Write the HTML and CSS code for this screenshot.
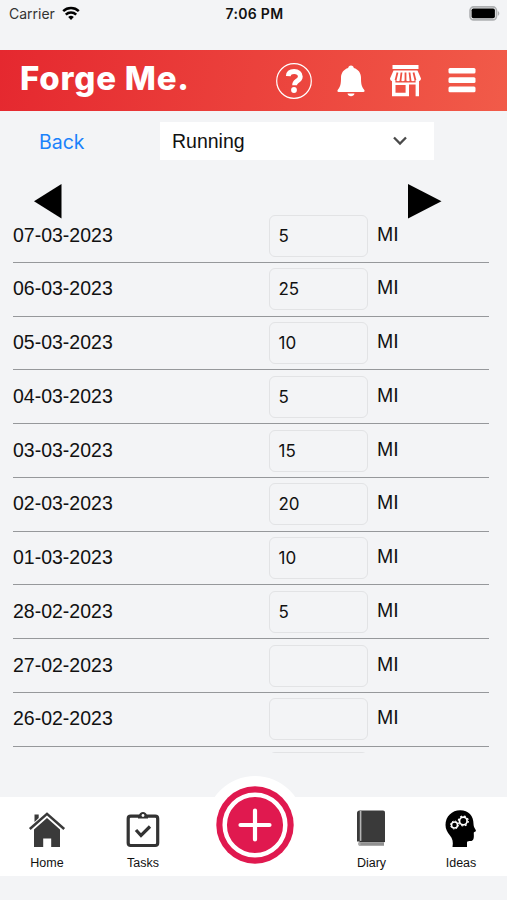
FILE: index.html
```html
<!DOCTYPE html>
<html lang="en">

<head>
  <meta charset="UTF-8">
  <meta name="viewport" content="width=device-width, initial-scale=1">
  <title>Forge Me - Running</title>
  <link rel="stylesheet" href="styles.css">
</head>

<body>
  <div class="app">
    <div class="status-bar">
      <div class="carrier">
        <span>Carrier</span>
        <svg class="wifi" viewBox="0 0 18 14" width="18" height="14">
          <path d="M1.2 5.2a11.3 11.3 0 0 1 15.600 0M3.800 8.600a7.500 7.500 0 0 1 10.400 0" fill="none" stroke="#000" stroke-width="2.500"/>
          <path d="M9 13.900 6.200 11a4.200 4.200 0 0 1 5.600 0z"/>
        </svg>
      </div>
      <div class="time">7:06 PM</div>
      <svg class="battery" viewBox="0 0 31 15" width="31" height="15">
        <rect x="1" y=".9" width="26.500" height="13" rx="3.600" fill="#e9eaeb" stroke="#aeb0b2" stroke-width="1.600"/>
        <rect x="2.600" y="2.500" width="23.300" height="9.800" rx="1.800"/>
        <path d="M28.800 5c2 .8 2 4 0 4.800z" fill="#aeb0b2"/>
      </svg>
    </div>

    <div class="header">
      <div class="logo">Forge Me.</div>
      <div class="header-icons">
        <svg viewBox="0 0 36 36" width="36" height="36">
          <circle cx="18" cy="18" r="17.300" fill="none" stroke="#fff" stroke-width="1.200"/>
          <path d="M12.300 13.100C12.500 9.800 14.700 8.500 18.100 8.500c3.800 0 6.200 1.800 6.200 4.900 0 2.400-1.400 3.500-3.300 4.700-1.900 1.200-2.400 2-2.400 4.200" fill="none" stroke="#fff" stroke-width="4.800"/>
          <circle cx="18" cy="27" r="2.900" fill="#fff"/>
        </svg>
        <svg viewBox="0 0 28 32" width="28" height="32" fill="#fff">
          <path d="M14 .5c1.600 0 2.700 1 2.800 2.500 4.500 1.300 7.200 5 7.200 9.800 0 6.200.6 9 3.300 12.200.6.900.3 2-.9 2H1.600c-1.200 0-1.500-1.100-.9-2C3.400 21.800 4 19 4 12.800 4 8 6.700 4.300 11.200 3 11.300 1.500 12.400.5 14 .5z"/>
          <path d="M10.500 28.500h7c-.5 3.500-6.500 3.500-7 0z"/>
        </svg>
        <svg class="store" viewBox="0 0 31 32" width="31" height="32" fill="#fff">
          <path d="M2.500 0h26v4h-26z"/>
          <path d="M3.500 5.500h24L31 13.500c-.3 3.400-4.500 3.300-5.500.5-.6 3-4.500 3-5 0-.7 3-4 3-5 0-1 3-4.300 3-5 0-.5 3-4.400 3-5 0-1 2.800-5.200 2.900-5.500-.5z"/>
          <path d="M7.500 7.500 5.500 15.500M11.500 7.500 10.500 15.500M15.500 7.500v8M19.500 7.500l1 8M23.500 7.500l2 8" fill="none" stroke="#ef5043" stroke-width="1.800"/>
          <path fill-rule="evenodd" d="M2 15h3.400v2.500h20.200V15H29v16.300h-3.400V19.500H19v11.800H2zM5.500 20v7.800h10.100V20z"/>
        </svg>
        <svg viewBox="0 0 28 26" width="28" height="26" fill="#fff">
          <rect x=".5" y="0" width="27" height="5.600" rx="1.500"/>
          <rect x=".5" y="9.300" width="27" height="5.600" rx="1.500"/>
          <rect x=".5" y="18.600" width="27" height="5.600" rx="1.500"/>
        </svg>
      </div>
    </div>

    <div class="toolbar">
      <a class="back">Back</a>
      <div class="select">
        <span>Running</span>
        <svg viewBox="0 0 16 10" width="16" height="10">
          <path d="M2 1.500 8 7.500 14 1.500" fill="none" stroke="#4a4a4a" stroke-width="2.300"/>
        </svg>
      </div>
    </div>

    <div class="pager">
      <svg viewBox="0 0 28 35" width="28" height="35"><path d="M0 17.300 27.500 0v34.600z"/></svg>
      <svg viewBox="0 0 34 35" width="34" height="35"><path d="M33.500 17.300 0 0v34.600z"/></svg>
    </div>

    <div class="list">
      <div class="row"><span class="date">07-03-2023</span><span class="value">5</span><span class="unit">MI</span></div>
      <div class="row"><span class="date">06-03-2023</span><span class="value">25</span><span class="unit">MI</span></div>
      <div class="row"><span class="date">05-03-2023</span><span class="value">10</span><span class="unit">MI</span></div>
      <div class="row"><span class="date">04-03-2023</span><span class="value">5</span><span class="unit">MI</span></div>
      <div class="row"><span class="date">03-03-2023</span><span class="value">15</span><span class="unit">MI</span></div>
      <div class="row"><span class="date">02-03-2023</span><span class="value">20</span><span class="unit">MI</span></div>
      <div class="row"><span class="date">01-03-2023</span><span class="value">10</span><span class="unit">MI</span></div>
      <div class="row"><span class="date">28-02-2023</span><span class="value">5</span><span class="unit">MI</span></div>
      <div class="row"><span class="date">27-02-2023</span><span class="value"></span><span class="unit">MI</span></div>
      <div class="row"><span class="date">26-02-2023</span><span class="value"></span><span class="unit">MI</span></div>
      <div class="row"><span class="date"></span><span class="value"></span><span class="unit"></span></div>
    </div>

    <div class="tabs">
      <div class="tab">
        <svg viewBox="0 0 38 38" width="38" height="38" fill="#3a3a3a">
          <path d="M6.500 4.500h4.200V8L6.500 12z"/>
          <path d="M1.800 19 19 3.800 36.200 19" fill="none" stroke="#3a3a3a" stroke-width="2.500"/>
          <path d="M19 8 32 19.500V37h-8.800v-8.500h-8V37H6V19.500z"/>
        </svg>
        <span>Home</span>
      </div>
      <div class="tab">
        <svg viewBox="0 0 38 38" width="38" height="38">
          <rect x="4.200" y="6.200" width="29.500" height="29.300" rx="2.500" fill="none" stroke="#333" stroke-width="3.200"/>
          <path d="M14 8.500V5.500h1C15.500.8 22.500.8 23 5.500h1v3z" fill="#333"/>
          <circle cx="19" cy="5.500" r="1.400" fill="#fff"/>
          <path d="m12 20 5 5.500 9-9" fill="none" stroke="#333" stroke-width="3.200"/>
        </svg>
        <span>Tasks</span>
      </div>
      <div class="add">
        <svg viewBox="0 0 78 78" width="78" height="78">
          <circle cx="39" cy="39" r="38.700" fill="#e0194f"/>
          <circle cx="39" cy="39" r="30.300" fill="none" stroke="#fff" stroke-width="4.500"/>
          <path d="M39 24.500v29M24.500 39h29" stroke="#fff" stroke-width="4.200" stroke-linecap="round"/>
        </svg>
      </div>
      <div class="tab">
        <svg viewBox="0 0 38 38" width="38" height="38">
          <path d="M4 3c0-1.500 1-2.500 2.500-2.500H30c1.200 0 2 .7 2 2V31.500H4z" fill="#3a3a3a"/>
          <path d="M7.600 1v30.500" stroke="#b5b5b5" stroke-width="1.600"/>
          <path d="M5 33.700c0-1.600 1.300-2.200 2.500-2.200H31V36H7.500C6 36 5 35.200 5 33.700z" fill="#aaa"/>
          <path d="M7.500 34H31" stroke="#777" stroke-width="1"/>
          <path d="M6.500 31.500H32" stroke="#333" stroke-width="1.200"/>
        </svg>
        <span>Diary</span>
      </div>
      <div class="tab">
        <svg viewBox="0 0 38 38" width="38" height="38">
          <path d="M10.500 37c.9-5 .1-8.500-2.700-11.800C5.400 22.300 3.500 19.200 3.500 15 3.500 6.500 10 .3 18.200.3c8.300 0 13.300 5.700 13.300 13.500 0 2.300.7 3.600 1.800 5.500.9 1.600 1 2.300-.9 2.700-.7.200-.6.700-.6 1.700.3 5-.4 7.200-3.300 7.400-3.200.2-3.500.4-3.500 2.500V37z"/>
          <g fill="none" stroke="#fff">
            <circle cx="12.500" cy="15" r="3" stroke-width="1.500"/>
            <circle cx="12.500" cy="15" r="4" stroke-width="1" stroke-dasharray="1.570 1.571"/>
            <circle cx="21.300" cy="11" r="3.800" stroke-width="1.700"/>
            <circle cx="21.300" cy="11" r="5" stroke-width="1.200" stroke-dasharray="1.960 1.967"/>
          </g>
        </svg>
        <span>Ideas</span>
      </div>
    </div>
  </div>
</body>

</html>
```
FILE: styles.css
```css
body {
  margin: 0;
  background-color: #f3f4f6;
  color: #111;
  font-family: 'Liberation Sans', Arial, sans-serif;
}

svg {
  display: block;
  flex-shrink: 0;
}

.app {
  width: 507px;
  height: 900px;
  overflow: hidden;
}

.status-bar {
  display: grid;
  grid-template-columns: 1fr auto 1fr;
  align-items: center;
  box-sizing: border-box;
  height: 50px;
  padding: 0 7px 24px 9px;
  font-family: Inter, sans-serif;
  font-size: 14px;
}

.carrier {
  display: flex;
  align-items: center;
  gap: 7px;
  color: #333;
}

.time {
  font-weight: 600;
  letter-spacing: 0.3px;
}

.battery {
  justify-self: end;
}

.header {
  display: flex;
  align-items: center;
  justify-content: space-between;
  box-sizing: border-box;
  height: 61px;
  padding: 0 31px 0 20px;
  background: linear-gradient(100deg, #e5282f, #f15b49);
}

.logo {
  color: #fff;
  font-family: Inter, sans-serif;
  font-size: 33px;
  font-weight: 800;
  letter-spacing: 0.8px;
  line-height: 56px;
  padding-bottom: 5px;
}

.header-icons {
  display: flex;
  align-items: center;
  gap: 25px;
}

.store {
  margin-right: 2px;
}

.toolbar {
  display: flex;
  align-items: center;
  padding-top: 11px;
  font-size: 19.5px;
}

.back {
  width: 121px;
  padding: 2px 0 0 39px;
  color: #1a82fb;
  font-family: Inter, sans-serif;
}

.select {
  display: flex;
  align-items: center;
  justify-content: space-between;
  box-sizing: border-box;
  width: 274px;
  height: 38px;
  padding: 0 26px 0 12px;
  background-color: #fff;
}

.select span {
  padding-top: 1px;
}

.pager {
  display: flex;
  justify-content: space-between;
  height: 25px;
  padding: 24px 65px 0 34px;
}

.list {
  height: 544px;
  margin: 0 18px 0 13px;
  overflow: hidden;
}

.row {
  display: grid;
  grid-template-columns: 256px 99px 1fr;
  box-sizing: border-box;
  height: 53.75px;
  padding-top: 5.5px;
  border-bottom: 1px solid #96989b;
  font-size: 19.5px;
  line-height: 41px;
}

.value {
  box-sizing: border-box;
  height: 42px;
  padding-left: 8.5px;
  border: 1px solid #e2e3e5;
  border-radius: 6px;
  font-family: Inter, sans-serif;
  font-size: 17px;
}

.unit {
  padding-left: 9px;
  line-height: 39px;
}

.tabs {
  display: grid;
  grid-template-columns: 94px 98px 125px 109px 70px;
  justify-items: center;
  box-sizing: border-box;
  height: 79px;
  margin-top: 44px;
  background-color: #fff;
  font-size: 12.5px;
}

.tab {
  display: flex;
  flex-direction: column;
  align-items: center;
  width: 56px;
  padding-top: 13px;
}

.tab span {
  margin-top: 8px;
}

.add {
  display: flex;
  align-items: center;
  justify-content: center;
  width: 98px;
  height: 98px;
  margin-top: -21px;
  border-radius: 50%;
  background-color: #fff;
}
```
